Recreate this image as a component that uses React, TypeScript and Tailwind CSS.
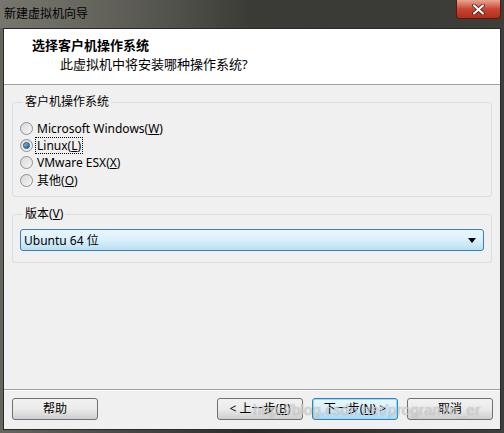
const ui = { fontFamily: '"Noto Sans", "Noto Sans CJK SC", sans-serif' }

function Radio({ label, accel, checked, focused }: { label: string; accel: string; checked?: boolean; focused?: boolean }) {
  return (
    <div className="flex items-center h-[17px]">
      <span className="w-[13px] h-[13px] rounded-full border border-[#8e8f8f] bg-gradient-to-br from-[#d9d9d9] to-[#f6f6f6] flex items-center justify-center">
        {checked && <span className="w-[7px] h-[7px] rounded-full bg-gradient-to-br from-[#8ac6ec] to-[#155c95] border border-[#1c5180]" />}
      </span>
      <span className={`ml-[3px] px-[1px] text-[12px] leading-[15px] text-black ${focused ? 'outline outline-1 outline-dotted outline-black' : ''}`}>
        {label}(<span className="underline">{accel}</span>)
      </span>
    </div>
  )
}

function Button({ children, primary }: { children: React.ReactNode; primary?: boolean }) {
  return (
    <div
      className={`w-[86px] h-[22px] rounded-[3px] border flex items-center justify-center text-[12px] text-black bg-gradient-to-b ${
        primary ? 'border-[#3c7fb1] from-[#eaf6fd] via-[#d9f0fc] to-[#a7d9f5] shadow-[inset_0_0_0_1px_#94dcfc]' : 'border-[#707070] from-[#f2f2f2] via-[#ebebeb] to-[#cfcfcf]'
      }`}
    >
      {children}
    </div>
  )
}

export default function App() {
  return (
    <div style={ui} className="w-[504px] h-[433px] relative overflow-hidden bg-gradient-to-r from-[#66665e] via-[#2c2c2a] to-[#3e3e3a] flex flex-col">
      <div className="h-[28px] flex items-start justify-between shrink-0 bg-gradient-to-r from-[#7a7a72]/80 via-[#505048]/40 to-transparent">
        <div className="pl-[4px] pt-[6px] text-[12px] leading-[16px] text-black">新建虚拟机向导</div>
        <div className="mr-[3px] w-[45px] h-[19px] rounded-b-[4px] border border-t-0 border-[#5a1a10] bg-gradient-to-b from-[#e8a493] via-[#c74532] to-[#b62d17] flex items-center justify-center">
          <svg width="13" height="11" viewBox="0 0 13 11">
            <path d="M2 1.5 L11 9.5 M11 1.5 L2 9.5" stroke="#3a1510" strokeWidth="3.6" strokeLinecap="round" />
            <path d="M2 1.5 L11 9.5 M11 1.5 L2 9.5" stroke="#fff" strokeWidth="2.2" strokeLinecap="round" />
          </svg>
        </div>
      </div>

      <div className="mx-[3px] mb-[3px] flex-1 border border-[#2a2a2a] bg-[#f0f0f0] flex flex-col">
        <div className="h-[56px] bg-white border-b border-[#a0a0a0] shrink-0 pt-[8px] pl-[28px]">
          <div className="text-[13px] leading-[17px] font-bold text-black">选择客户机操作系统</div>
          <div className="mt-[2px] pl-[28px] text-[13px] leading-[17px] text-black">此虚拟机中将安装哪种操作系统?</div>
        </div>

        <div className="flex-1 px-[8px] pt-[10px] flex flex-col">
          <fieldset className="border border-[#d5dfe5] rounded-[3px] px-[7px] pb-[6px] pt-[11px] h-[102px]">
            <legend className="ml-[3px] px-[2px] text-[12px] leading-[14px] text-black">客户机操作系统</legend>
            <div className="flex flex-col">
              <Radio label="Microsoft Windows" accel="W" />
              <Radio label="Linux" accel="L" checked focused />
              <Radio label="VMware ESX" accel="X" />
              <div className="mt-[1px]">
                <Radio label="其他" accel="O" />
              </div>
            </div>
          </fieldset>

          <fieldset className="mt-[10px] border border-[#d5dfe5] rounded-[3px] px-[7px] pt-[8px] h-[56px]">
            <legend className="ml-[3px] px-[2px] text-[12px] leading-[14px] text-black">
              版本(<span className="underline">V</span>)
            </legend>
            <div className="h-[22px] rounded-[3px] border border-[#3c7fb1] bg-gradient-to-b from-[#eaf6fd] via-[#d9f0fc] to-[#b9dff3] flex items-center justify-between pl-[3px] pr-[7px]">
              <span className="text-[12px] leading-[15px] text-black">Ubuntu 64 位</span>
              <svg width="8" height="5" viewBox="0 0 8 5">
                <path d="M0 0 H8 L4 5 Z" fill="#000" />
              </svg>
            </div>
          </fieldset>
        </div>

        <div className="shrink-0 border-t border-[#a0a0a0] shadow-[inset_0_1px_0_#fff] h-[40px] flex items-center pl-[8px] pr-[7px] pb-[1px]">
          <Button>帮助</Button>
          <div className="flex-1" />
          <div className="flex gap-[9px]">
            <Button>&lt; 上一步(<span className="underline">B</span>)</Button>
            <Button primary>下一步(<span className="underline">N</span>) &gt;</Button>
            <Button>取消</Button>
          </div>
        </div>
      </div>

      <div className="absolute left-[253px] top-[401px] font-['Liberation_Sans',sans-serif] text-[15px] leading-[18px] tracking-[0.2px] text-white/60 [text-shadow:0_0_1px_rgba(90,90,90,0.7)] pointer-events-none">
        http://blog.csdn.net/programm_er
      </div>
    </div>
  )
}
